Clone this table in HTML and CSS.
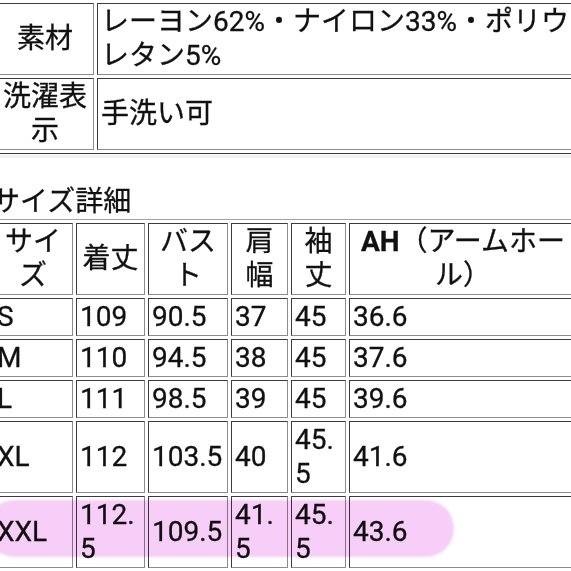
FILE: index.html
```html
<!DOCTYPE html>
<html lang="ja">
<head>
<meta charset="utf-8">
<title>サイズ詳細</title>
<link rel="stylesheet" href="styles.css">
</head>
<body>
<div class="page">
  <table class="spec">
    <tr>
      <th class="spec-label">素材</th>
      <td class="spec-value">レーヨン62%・ナイロン33%・ポリウレタン5%</td>
    </tr>
    <tr>
      <th class="spec-label">洗濯表示</th>
      <td class="spec-value">手洗い可</td>
    </tr>
  </table>
  <div class="divider"></div>
  <h3 class="size-title">サイズ詳細</h3>
  <table class="sizes">
    <tr>
      <th class="c1">サイズ</th>
      <th class="c2">着丈</th>
      <th class="c3">バスト</th>
      <th class="c4">肩幅</th>
      <th class="c5">袖丈</th>
      <th class="c6"><b class="ah">AH</b>（アームホール）</th>
    </tr>
    <tr><td>S</td><td>109</td><td>90.5</td><td>37</td><td>45</td><td>36.6</td></tr>
    <tr><td>M</td><td>110</td><td>94.5</td><td>38</td><td>45</td><td>37.6</td></tr>
    <tr><td>L</td><td>111</td><td>98.5</td><td>39</td><td>45</td><td>39.6</td></tr>
    <tr><td>XL</td><td>112</td><td>103.5</td><td>40</td><td>45.5</td><td>41.6</td></tr>
    <tr><td>XXL</td><td>112.5</td><td>109.5</td><td>41.5</td><td>45.5</td><td>43.6</td></tr>
  </table>
  <div class="marker"></div>
</div>
</body>
</html>
```

FILE: styles.css
```css
html, body {
  margin: 0;
  padding: 0;
  background: #fff;
  overflow: hidden;
}

.page {
  position: relative;
  width: 571px;
  height: 571px;
  overflow: hidden;
  font-family: Roboto, "Noto Sans CJK JP", sans-serif;
  font-size: 28px;
  line-height: 34px;
  color: #111;
  -webkit-text-stroke: 0.3px #111;
}

table {
  border-collapse: separate;
  border-spacing: 3px;
  table-layout: fixed;
  border-style: solid;
  border-width: 1px;
  border-color: #a0a0a0 #3a3a3a #3a3a3a #a0a0a0;
}

th, td {
  padding: 1px 3px;
  border-style: solid;
  border-width: 1px;
  border-color: #3c3c3c #8c8c8c #8c8c8c #3c3c3c;
  font-weight: normal;
  vertical-align: middle;
}

/* top spec table */
.spec {
  width: 597px;
  margin: -1px 0 0 -8px;
}

.spec-label {
  width: 90px;
  text-align: center;
}

.spec-value {
  width: 480px;
  text-align: left;
}

.divider {
  margin-top: 1px;
  height: 3px;
  background: #f1f1f1;
}

.size-title {
  margin: 27px 0 0 -8px;
  font-size: 28px;
  line-height: 34px;
  font-weight: normal;
}

/* size table */
.sizes {
  width: 592px;
  margin-left: -11px;
}

.sizes th {
  text-align: center;
}

.sizes td {
  text-align: left;
  word-break: break-all;
}

.c1 { width: 72px; }
.c2 { width: 61px; }
.c3 { width: 72px; }
.c4 { width: 49px; }
.c5 { width: 47px; }
.c6 { width: 220px; }

.ah {
  font-weight: 700;
}

/* highlighter marker over the XXL row */
.marker {
  position: absolute;
  left: -14px;
  top: 500px;
  width: 468px;
  height: 57px;
  border-radius: 30px;
  background: #f7cef7;
  mix-blend-mode: multiply;
  filter: blur(0.8px);
}
```
